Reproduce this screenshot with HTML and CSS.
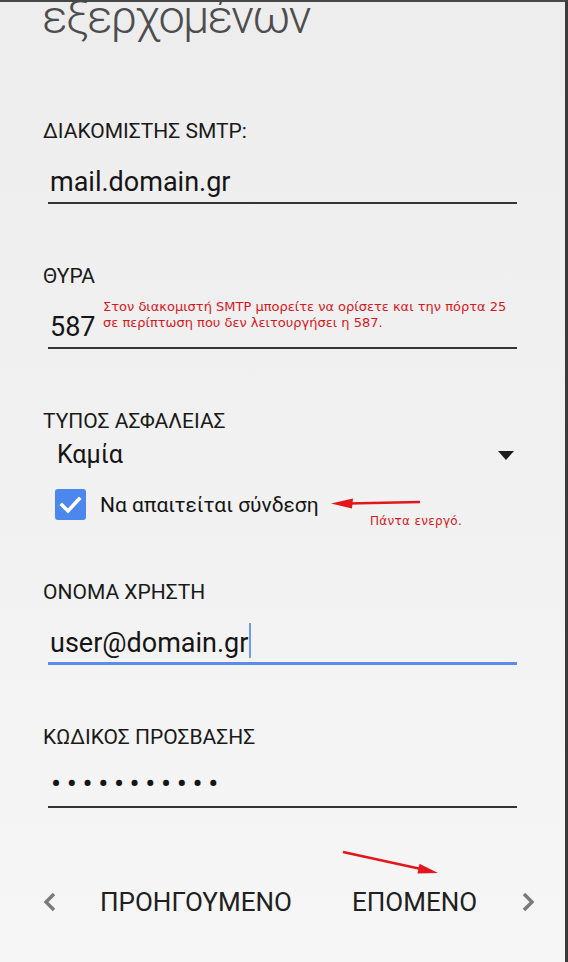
FILE: index.html
```html
<!DOCTYPE html>
<html lang="el">
<head>
<meta charset="utf-8">
<title>Ρυθμίσεις εξερχομένων</title>
<link rel="stylesheet" href="styles.css">
</head>
<body>
<div class="screen">
  <div class="content">
    <h1 class="title">εξερχομένων</h1>

    <div class="field field-first">
      <div class="label">ΔΙΑΚΟΜΙΣΤΗΣ SMTP:</div>
      <div class="input">mail.domain.gr</div>
    </div>

    <div class="field">
      <div class="label">ΘΥΡΑ</div>
      <div class="input">587</div>
    </div>

    <div class="field">
      <div class="label">ΤΥΠΟΣ ΑΣΦΑΛΕΙΑΣ</div>
      <div class="select">
        <span>Καμία</span>
        <svg class="select-caret" width="16" height="9" viewBox="0 0 16 9"><polygon points="0,0 16,0 8,9" fill="#1d1d1d"/></svg>
      </div>
      <div class="check">
        <span class="check-box">
          <svg width="31" height="31" viewBox="0 0 31 31"><polyline points="7,16 13,22 24,10" fill="none" stroke="#fff" stroke-width="3.6" stroke-linecap="square"/></svg>
        </span>
        <span class="check-text">Να απαιτείται σύνδεση</span>
      </div>
    </div>

    <div class="field">
      <div class="label">ΟΝΟΜΑ ΧΡΗΣΤΗ</div>
      <div class="input input-focused">user@domain.gr<span class="cursor"></span></div>
    </div>

    <div class="field">
      <div class="label">ΚΩΔΙΚΟΣ ΠΡΟΣΒΑΣΗΣ</div>
      <div class="input input-password">•••••••••••</div>
    </div>

    <nav class="nav">
      <svg class="chev" width="13" height="20" viewBox="0 0 13 20"><polyline points="11,2 3,10 11,18" fill="none" stroke="#7a7a7a" stroke-width="3.4"/></svg>
      <span class="nav-btn">ΠΡΟΗΓΟΥΜΕΝΟ</span>
      <span class="nav-btn">ΕΠΟΜΕΝΟ</span>
      <svg class="chev" width="13" height="20" viewBox="0 0 13 20"><polyline points="2,2 10,10 2,18" fill="none" stroke="#7a7a7a" stroke-width="3.4"/></svg>
    </nav>
  </div>

  <p class="note note-port">Στον διακομιστή SMTP μπορείτε να ορίσετε και την πόρτα 25<br>σε περίπτωση που δεν λειτουργήσει η 587.</p>
  <p class="note note-check">Πάντα ενεργό.</p>

  <svg class="marks" width="568" height="962" viewBox="0 0 568 962">
    <line x1="420" y1="502" x2="348" y2="503.5" stroke="#e3161b" stroke-width="2.6"/>
    <polygon points="331,503.5 353,498.5 352,508.5" fill="#e3161b"/>
    <line x1="343" y1="852" x2="421" y2="869" stroke="#e3161b" stroke-width="2.6"/>
    <polygon points="438,873 417.5,873.5 419.5,863.8" fill="#e3161b"/>
  </svg>
</div>
</body>
</html>
```

FILE: styles.css
```css
html, body {
  margin: 0;
  padding: 0;
}

body {
  font-family: Roboto, "Noto Sans", sans-serif;
  color: #1b1b1b;
}

.screen {
  position: relative;
  width: 568px;
  height: 962px;
  box-sizing: border-box;
  border-top: 2px solid #474747;
  border-right: 3px solid #3a3a3a;
  background: linear-gradient(#ededed, #f1f1f1 50%, #f6f6f6);
  overflow: hidden;
}

.content {
  padding: 0 48px 0 43px;
}

.title {
  margin: -9px 0 0 -1px;
  font-size: 47px;
  line-height: 47px;
  font-weight: 300;
  letter-spacing: -1.8px;
  color: #4d4d4d;
}

.field {
  padding-top: 60px;
}

.field-first {
  padding-top: 79px;
}

.label {
  font-size: 21px;
  line-height: 24px;
  color: #1a1a1a;
}

.input {
  margin: 23px 0 0 5px;
  padding: 0 0 4px 2px;
  font-size: 27px;
  line-height: 32px;
  color: #151515;
  border-bottom: 2px solid #343434;
}

.input-focused {
  border-bottom: 3px solid #5a8de6;
  padding-bottom: 3px;
}

.cursor {
  display: inline-block;
  width: 2px;
  height: 35px;
  margin-top: -10px;
  margin-left: 1px;
  vertical-align: -6px;
  background: #6a9cf0;
}

.input-password {
  line-height: 24px;
  padding-top: 0;
  padding-bottom: 10px;
  font-size: 30px;
  letter-spacing: 5.6px;
  padding-left: 3px;
}

.select {
  display: flex;
  align-items: center;
  justify-content: space-between;
  margin: 7px 3px 0 14px;
  font-size: 25px;
  line-height: 30px;
  color: #151515;
}

.select-caret {
  display: block;
  margin-top: 0;
}

.check {
  display: flex;
  align-items: center;
  gap: 14px;
  margin: 19px 0 0 12px;
}

.check-box {
  display: block;
  width: 31px;
  height: 31px;
  border-radius: 3px;
  background: #4b87ec;
}

.check-box svg {
  display: block;
}

.check-text {
  font-size: 21px;
  line-height: 28px;
  color: #151515;
}

.nav {
  display: grid;
  grid-template-columns: 57px 252px 170px 13px;
  align-items: center;
  margin-top: 78px;
  height: 32px;
}

.chev {
  display: block;
}

.nav-btn {
  font-size: 26px;
  line-height: 32px;
  color: #202020;
}

.note {
  position: absolute;
  margin: 0;
  font-family: "DejaVu Sans", sans-serif;
  color: #d9161b;
}

.note-port {
  left: 103px;
  top: 297px;
  font-size: 13px;
  line-height: 15.5px;
}

.note-check {
  left: 370px;
  top: 511px;
  font-size: 12px;
  line-height: 16px;
  letter-spacing: 0.3px;
}

.marks {
  position: absolute;
  left: 0;
  top: -2px;
  pointer-events: none;
}
```
